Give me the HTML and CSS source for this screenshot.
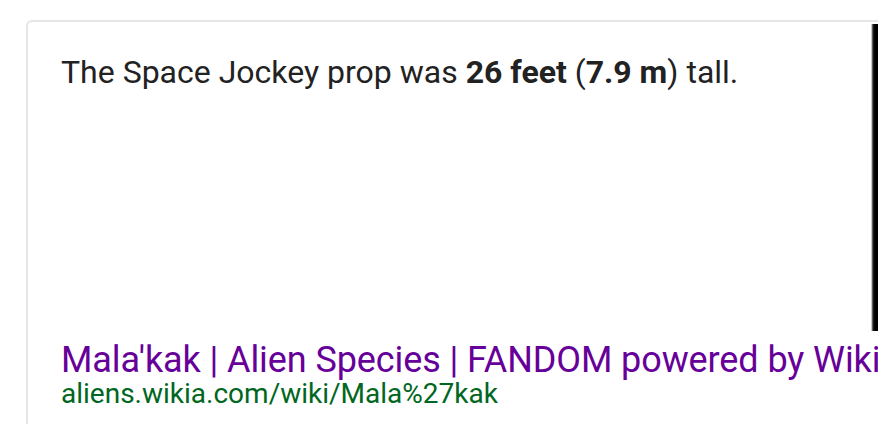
FILE: index.html
```html
<!DOCTYPE html>
<html>
<head>
<meta charset="utf-8">
<link rel="stylesheet" href="styles.css">
</head>
<body>
<div class="card">
  <div class="main">
    <div class="answer">
      <p class="snippet">The Space Jockey prop was <b>26 feet</b> (<b>7.9 m</b>) tall.</p>
      <div class="media"></div>
    </div>
    <div class="result">
      <a class="title" href="#">Mala'kak | Alien Species | FANDOM powered by Wikia</a>
      <div class="url">aliens.wikia.com/wiki/Mala%27kak</div>
    </div>
  </div>
</div>
</body>
</html>
```
FILE: styles.css
```css
html, body {
  margin: 0;
  padding: 0;
  background: #fff;
}
body {
  width: 878px;
  height: 424px;
  overflow: hidden;
  font-family: Roboto, "Liberation Sans", Arial, sans-serif;
}
.card {
  margin: 20px 0 0 26px;
  width: 852px;
  height: 404px;
  border: 2px solid #e6e6e6;
  border-right: none;
  border-bottom: none;
  border-radius: 6px 0 0 0;
  box-sizing: border-box;
  overflow: hidden;
}
.main {
  padding: 0 0 0 33px;
}
.answer {
  display: flex;
  height: 309px;
}
.snippet {
  margin: 0;
  padding-top: 30px;
  width: 810px;
  font-size: 32px;
  line-height: 40px;
  color: #222;
  flex: none;
}
.snippet b {
  font-weight: 700;
}
.media {
  margin-top: 2px;
  width: 12px;
  height: 307px;
  background: linear-gradient(to right, #fff 0, #999 1px, #222 2px, #000 4px);
  flex: none;
}
.result {
  padding-top: 10px;
}
.title {
  display: block;
  font-size: 36px;
  line-height: 38px;
  letter-spacing: -0.1px;
  color: #660099;
  text-decoration: none;
  white-space: nowrap;
}
.url {
  font-size: 28px;
  line-height: 30px;
  color: #006621;
  white-space: nowrap;
}
```
